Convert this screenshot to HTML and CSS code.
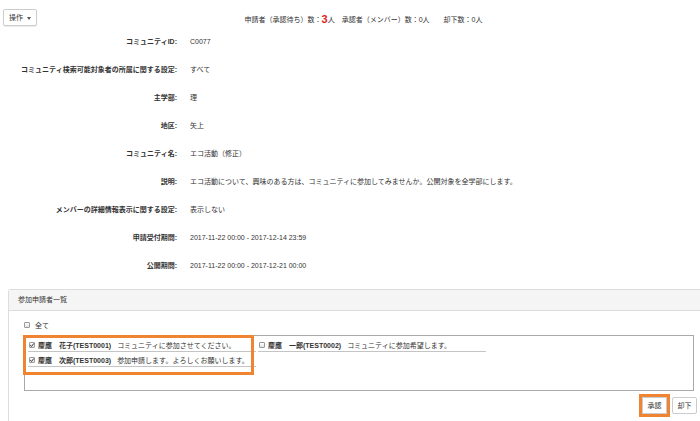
FILE: index.html
```html
<!DOCTYPE html>
<html>
<head>
    <meta charset="UTF-8">
    <title>コミュニティ申請者承認</title>
    <link rel="stylesheet" href="styles.css">
</head>
<body>

    <div class="toolbar">
        <button class="btn dropdown">操作 <span class="caret"></span></button>
        <p class="stats">申請者（承認待ち）数：<span class="count">3</span>人　承認者（メンバー）数：0人　　却下数：0人</p>
    </div>

    <!-- community details -->
    <div class="details">
        <div class="label">コミュニティID:</div>
        <div class="value">C0077</div>

        <div class="label">コミュニティ検索可能対象者の所属に関する設定:</div>
        <div class="value">すべて</div>

        <div class="label">主学部:</div>
        <div class="value">理</div>

        <div class="label">地区:</div>
        <div class="value">矢上</div>

        <div class="label">コミュニティ名:</div>
        <div class="value">エコ活動（修正）</div>

        <div class="label">説明:</div>
        <div class="value">エコ活動について、興味のある方は、コミュニティに参加してみませんか。公開対象を全学部にします。</div>

        <div class="label">メンバーの詳細情報表示に関する設定:</div>
        <div class="value">表示しない</div>

        <div class="label">申請受付期間:</div>
        <div class="value">2017-11-22 00:00 - 2017-12-14 23:59</div>

        <div class="label">公開期間:</div>
        <div class="value">2017-11-22 00:00 - 2017-12-21 00:00</div>
    </div>

    <div class="panel">
        <div class="panel-heading">参加申請者一覧</div>
        <div class="panel-body">
            <div class="check-all">
                <span class="checkbox"></span>
                <span>全て</span>
            </div>

            <div class="applicants">
                <div class="applicant">
                    <span class="checkbox checked"><svg viewBox="0 0 6 6"><path d="M1.2 3.1 L2.5 4.4 L4.9 1.4" fill="none" stroke="#333" stroke-width="1"/></svg></span>
                    <span class="name">慶應　花子(TEST0001)</span>
                    <span class="message">コミュニティに参加させてください。</span>
                </div>
                <div class="applicant">
                    <span class="checkbox"></span>
                    <span class="name">慶應　一郎(TEST0002)</span>
                    <span class="message">コミュニティに参加希望します。</span>
                </div>
                <div class="applicant">
                    <span class="checkbox checked"><svg viewBox="0 0 6 6"><path d="M1.2 3.1 L2.5 4.4 L4.9 1.4" fill="none" stroke="#333" stroke-width="1"/></svg></span>
                    <span class="name">慶應　次郎(TEST0003)</span>
                    <span class="message">参加申請します。よろしくお願いします。</span>
                </div>

                <!-- annotation -->
                <div class="highlight"></div>
            </div>

            <div class="actions">
                <button class="btn approve">承認</button>
                <button class="btn">却下</button>
            </div>
        </div>
    </div>

</body>
</html>
```

FILE: styles.css
```css
* {
    margin: 0;
    padding: 0;
    box-sizing: border-box;
}

body {
    font-family: "Liberation Sans", "Noto Sans CJK JP", sans-serif;
    font-size: 7px;
    color: #333;
    background: #fff;
    overflow: hidden;
}

.btn {
    font-family: inherit;
    font-size: 7px;
    color: #333;
    background: #fff;
    border: 1px solid #ccc;
    border-radius: 2px;
    height: 17px;
    padding: 0 5px;
    line-height: 15px;
}

/* top bar */

.toolbar {
    height: 27px;
    display: flex;
    align-items: flex-start;
    padding: 9px 0 0 3px;
}

.dropdown {
    width: 34px;
    box-shadow: 0 1px 1px rgba(0,0,0,0.08);
}

.caret {
    display: inline-block;
    width: 0;
    height: 0;
    margin-left: 2px;
    vertical-align: middle;
    border-top: 3px solid #555;
    border-left: 2.5px solid transparent;
    border-right: 2.5px solid transparent;
}

.stats {
    flex: 1;
    text-align: center;
    padding-right: 10px;
    height: 20px;
    line-height: 20px;
}

.count {
    color: #e0221b;
    font-weight: bold;
    font-size: 11px;
    vertical-align: -1px;
}

/* detail list */

.details {
    display: grid;
    grid-template-columns: 177px 1fr;
    grid-auto-rows: 28px;
    column-gap: 13px;
    align-items: center;
}

.label {
    text-align: right;
    font-weight: bold;
    color: #333;
}

.value {
    white-space: nowrap;
}

/* applicant panel */

.panel {
    margin: 10px 0 0 8px;
    border: 1px solid #ddd;
    border-right: none;
    border-bottom: none;
    border-radius: 3px 0 0 0;
    height: 140px;
}

.panel-heading {
    height: 21px;
    line-height: 20px;
    padding-left: 9px;
    background: #f5f5f5;
    border-bottom: 1px solid #ddd;
}

.panel-body {
    padding: 8px 6px 0 14px;
}

.check-all {
    display: flex;
    align-items: center;
    gap: 5px;
    height: 11px;
    margin-left: 1px;
}

.checkbox {
    display: inline-block;
    width: 6px;
    height: 6px;
    border: 1px solid #9a9a9a;
    border-radius: 1px;
    background: linear-gradient(#fff, #e2e2e2);
    flex-shrink: 0;
    position: relative;
}

.checkbox svg {
    position: absolute;
    left: -1px;
    top: -1px;
    width: 6px;
    height: 6px;
}

.applicants {
    position: relative;
    margin: 5px 0 0 1px;
    height: 56px;
    border: 1px solid #a9a9a9;
    padding: 2px 0 0 3px;
    display: flex;
    flex-wrap: wrap;
    align-content: flex-start;
    row-gap: 1px;
}

.applicant {
    width: 228px;
    height: 14px;
    margin-right: 2px;
    border-bottom: 1px solid #c4c4c4;
    display: flex;
    align-items: center;
    white-space: nowrap;
}

.applicant .checkbox {
    margin-left: 1px;
}

.name {
    font-weight: bold;
    margin-left: 3px;
}

.message {
    margin-left: 6px;
}

.highlight {
    position: absolute;
    left: -2px;
    top: -1px;
    width: 231px;
    height: 40px;
    border: 3px solid #ef8432;
}

.actions {
    display: flex;
    justify-content: flex-end;
    gap: 5px;
    margin: 6px -3px 0 0;
}

.actions .btn {
    width: 25px;
    padding: 0;
}

.approve {
    width: 24px;
    border-radius: 0;
    outline: 3px solid #ef8432;
}
```
